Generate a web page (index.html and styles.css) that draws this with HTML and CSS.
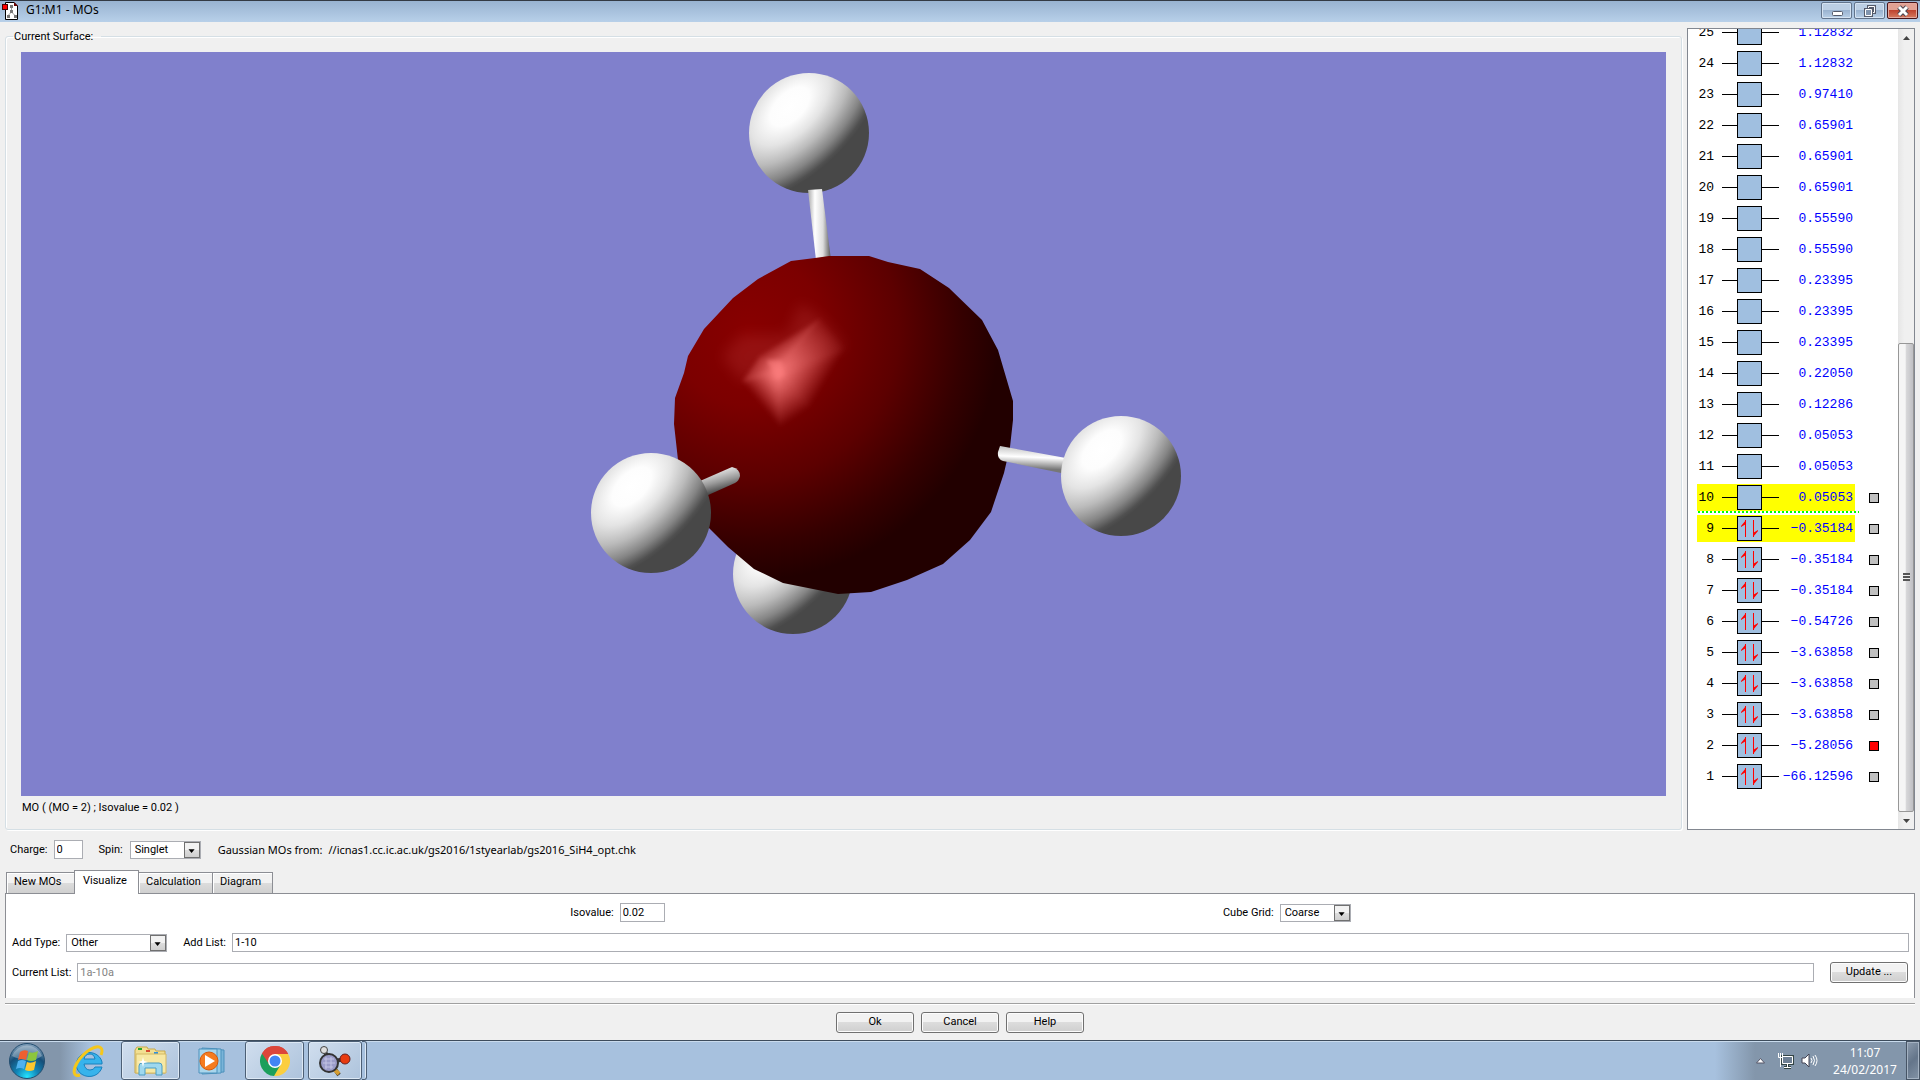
FILE: index.html
```html
<!DOCTYPE html>
<html lang="en">
<head>
<meta charset="utf-8">
<title>G1:M1 - MOs</title>
<link rel="stylesheet" href="styles.css">
</head>
<body>
<svg class="defs" width="0" height="0" aria-hidden="true">
  <symbol id="empty" viewBox="0 0 57 25"><path d="M0 12.5H57" stroke="#000"/><rect x="15.5" y=".5" width="24" height="24" fill="#a0bfe0" stroke="#000"/></symbol>
  <symbol id="full" viewBox="0 0 57 25"><path d="M0 12.5H57" stroke="#000"/><rect x="15.5" y=".5" width="24" height="24" fill="#a0bfe0" stroke="#000"/><path d="M23.5 4V21M31.500 4V21" stroke="#f00"/><path d="M24 4L19 10V11L24 8ZM31 21L36 15V14L31 17Z" fill="#f00"/></symbol>
  <symbol id="drop" viewBox="0 0 16 16"><path d="M4 7H11L7.500 11.500Z" fill="#000"/></symbol>
</svg>
<header class="titlebar">
  <svg class="app-icon" width="17" height="18" viewBox="0 0 17 18"><path d="M3.500 .5H12L15.500 4V17.500H3.500Z" fill="#fff" stroke="#000"/><path d="M12 0L16 4H12Z" fill="#600"/><path d="M9.500 5V10L5.500 14M9.500 10L13.500 14" fill="none" stroke="#999"/><path d="M8 3H11V6H8ZM8 8H11V11H8ZM5 13H8V16H5ZM12 13H15V16H12Z" fill="#777"/><rect x=".5" y="2.500" width="5" height="5" fill="#f00" stroke="#400"/></svg>
  <h1>G1:M1 - MOs</h1>
  <div class="winbtns">
    <button aria-label="Minimize"><svg width="28" height="14" viewBox="0 0 28 14"><rect x="9.500" y="7.500" width="10" height="4" rx="1" fill="#fff" stroke="#555b6b"/></svg></button>
    <button aria-label="Restore"><svg width="28" height="14" viewBox="0 0 28 14"><path d="M12.500 2.500H18.500V8.500H12.500Z" fill="#ccd9e8" stroke="#555b6b" stroke-width="3"/><path d="M12.500 2.500H18.500V8.500H12.500Z" fill="none" stroke="#fff"/><path d="M9.500 5.500H15.500V11.500H9.500Z" fill="#fff" stroke="#555b6b" stroke-width="3"/><path d="M9.500 5.500H15.500V11.500H9.500Z" fill="#8195af" stroke="#fff"/></svg></button>
    <button class="close" aria-label="Close"><svg width="28" height="14" viewBox="0 0 28 14"><path d="M10 3L18 11M18 3L10 11" stroke="#4c4650" stroke-width="5"/><path d="M10 3L18 11M18 3L10 11" stroke="#fff" stroke-width="3"/></svg></button>
  </div>
</header>
<main class="window">
  <div class="stage">
    <fieldset class="surface">
      <legend>Current Surface:</legend>
      <svg class="view" viewBox="0 0 1645 744" role="img" aria-label="Molecular orbital 2 surface">
        <defs>
          <radialGradient id="hyd" cx="0" cy="0" r="1" gradientTransform="translate(.34 .28) rotate(45) scale(.56 1)"><stop offset="0" stop-color="#fff"/><stop offset=".2" stop-color="#fdfdfd"/><stop offset=".4" stop-color="#e4e4e4"/><stop offset=".6" stop-color="#bbb"/><stop offset=".8" stop-color="#858585"/><stop offset=".95" stop-color="#505050"/><stop offset="1" stop-color="#484848"/></radialGradient>
          <radialGradient id="orb" cx=".22" cy=".22" r=".74"><stop offset="0" stop-color="#880000"/><stop offset=".3" stop-color="#7c0000"/><stop offset=".6" stop-color="#5c0000"/><stop offset=".85" stop-color="#350000"/><stop offset="1" stop-color="#220000"/></radialGradient>
          <linearGradient id="s" ><stop offset="0" stop-color="#ff8080"/><stop offset="1" stop-color="#ff8080" stop-opacity="0"/></linearGradient>
          <linearGradient id="s1" href="#s" gradientUnits="userSpaceOnUse" x1="755" y1="322" x2="731" y2="342"/>
          <linearGradient id="s2" href="#s" gradientUnits="userSpaceOnUse" x1="755" y1="322" x2="781" y2="361"/>
          <linearGradient id="s3" href="#s" gradientUnits="userSpaceOnUse" x1="755" y1="322" x2="795" y2="346"/>
          <linearGradient id="s4" href="#s" gradientUnits="userSpaceOnUse" x1="755" y1="322" x2="809" y2="276"/>
          <linearGradient id="s5" href="#s" gradientUnits="userSpaceOnUse" x1="755" y1="322" x2="740" y2="298"/>
          <linearGradient id="s6" href="#s" gradientUnits="userSpaceOnUse" x1="755" y1="322" x2="730" y2="305"/>
          <linearGradient id="rod" x1="0" x2="1" y1="0" y2="0"><stop offset="0" stop-color="#aaa"/><stop offset=".3" stop-color="#fff"/><stop offset=".65" stop-color="#ddd"/><stop offset="1" stop-color="#555"/></linearGradient>
          <linearGradient id="rod2" x1=".55" x2=".45" y1="0" y2="1"><stop offset=".1" stop-color="#ccc"/><stop offset=".4" stop-color="#fff"/><stop offset=".8" stop-color="#777"/></linearGradient>
          <linearGradient id="rod3" x1=".35" x2=".65" y1=".1" y2=".9"><stop offset=".1" stop-color="#ddd"/><stop offset=".5" stop-color="#999"/><stop offset=".9" stop-color="#444"/></linearGradient>
          <filter id="soft"><feGaussianBlur stdDeviation="2"/></filter>
          <filter id="softer"><feGaussianBlur stdDeviation="7"/></filter>
        </defs>
        <circle cx="788" cy="81" r="60" fill="url(#hyd)"/>
        <path d="M787 138L801 137L810 208H795Z" fill="url(#rod)"/>
        <circle cx="772" cy="522" r="60" fill="url(#hyd)"/>
        <path d="M770 209L794 206 808 204H848L867 210 899 217 928 236 961 268 977 298 992 349V368L989 395 983 421 970 460 949 488 922 512 886 528 850 540 817 542 792 537 762 531 733 517 707 495 688 476 665 437 657 408 653 372 654 346 663 321 667 304 683 277 712 246 737 227Z" fill="url(#orb)"/>
        <path d="M701 304L720 283 766 283 779 251 800 266 825 295 739 320 721 330Z" fill="#ff8080" opacity=".13" filter="url(#softer)"/>
        <g filter="url(#soft)">
          <path d="M755 322L721 330 759 376Z" fill="url(#s1)"/>
          <path d="M755 322L759 376 789 356Z" fill="url(#s2)"/>
          <path d="M755 322L789 356 825 295Z" fill="url(#s3)"/>
          <path d="M755 322L825 295 800 266Z" fill="url(#s4)"/>
          <path d="M755 322L800 266 739 304Z" fill="url(#s5)"/>
          <path d="M755 322L739 304 721 330Z" fill="url(#s6)"/>
          <path d="M745 308L760 308 764 322 757 330Z" fill="#ff8080" opacity=".6"/>
        </g>
        <path d="M679 429L711 415Q719 417 719 424Q718 429 714 431L685 444Z" fill="url(#rod3)"/>
        <path d="M979 394L1045 406V422L982 409Q976 407 977 400Z" fill="url(#rod2)"/>
        <circle cx="630" cy="461" r="60" fill="url(#hyd)"/>
        <circle cx="1100" cy="424" r="60" fill="url(#hyd)"/>
      </svg>
      <p class="caption">MO ( (MO = 2) ; Isovalue = 0.02 )</p>
    </fieldset>
    <section class="levels" aria-label="Orbital energies">
      <div class="list">
        <table>
          <tr><td>25</td><td><svg><use href="#empty"/></svg></td><td>1.12832</td><td></td></tr>
          <tr><td>24</td><td><svg><use href="#empty"/></svg></td><td>1.12832</td><td></td></tr>
          <tr><td>23</td><td><svg><use href="#empty"/></svg></td><td>0.97410</td><td></td></tr>
          <tr><td>22</td><td><svg><use href="#empty"/></svg></td><td>0.65901</td><td></td></tr>
          <tr><td>21</td><td><svg><use href="#empty"/></svg></td><td>0.65901</td><td></td></tr>
          <tr><td>20</td><td><svg><use href="#empty"/></svg></td><td>0.65901</td><td></td></tr>
          <tr><td>19</td><td><svg><use href="#empty"/></svg></td><td>0.55590</td><td></td></tr>
          <tr><td>18</td><td><svg><use href="#empty"/></svg></td><td>0.55590</td><td></td></tr>
          <tr><td>17</td><td><svg><use href="#empty"/></svg></td><td>0.23395</td><td></td></tr>
          <tr><td>16</td><td><svg><use href="#empty"/></svg></td><td>0.23395</td><td></td></tr>
          <tr><td>15</td><td><svg><use href="#empty"/></svg></td><td>0.23395</td><td></td></tr>
          <tr><td>14</td><td><svg><use href="#empty"/></svg></td><td>0.22050</td><td></td></tr>
          <tr><td>13</td><td><svg><use href="#empty"/></svg></td><td>0.12286</td><td></td></tr>
          <tr><td>12</td><td><svg><use href="#empty"/></svg></td><td>0.05053</td><td></td></tr>
          <tr><td>11</td><td><svg><use href="#empty"/></svg></td><td>0.05053</td><td></td></tr>
          <tr class="sel lumo"><td>10</td><td><svg><use href="#empty"/></svg></td><td>0.05053</td><td><input type="checkbox" aria-label="MO 10"></td></tr>
          <tr class="sel"><td>9</td><td><svg><use href="#full"/></svg></td><td>−0.35184</td><td><input type="checkbox" aria-label="MO 9"></td></tr>
          <tr><td>8</td><td><svg><use href="#full"/></svg></td><td>−0.35184</td><td><input type="checkbox" aria-label="MO 8"></td></tr>
          <tr><td>7</td><td><svg><use href="#full"/></svg></td><td>−0.35184</td><td><input type="checkbox" aria-label="MO 7"></td></tr>
          <tr><td>6</td><td><svg><use href="#full"/></svg></td><td>−0.54726</td><td><input type="checkbox" aria-label="MO 6"></td></tr>
          <tr><td>5</td><td><svg><use href="#full"/></svg></td><td>−3.63858</td><td><input type="checkbox" aria-label="MO 5"></td></tr>
          <tr><td>4</td><td><svg><use href="#full"/></svg></td><td>−3.63858</td><td><input type="checkbox" aria-label="MO 4"></td></tr>
          <tr><td>3</td><td><svg><use href="#full"/></svg></td><td>−3.63858</td><td><input type="checkbox" aria-label="MO 3"></td></tr>
          <tr><td>2</td><td><svg><use href="#full"/></svg></td><td>−5.28056</td><td><input type="checkbox" aria-label="MO 2" checked></td></tr>
          <tr><td>1</td><td><svg><use href="#full"/></svg></td><td>−66.12596</td><td><input type="checkbox" aria-label="MO 1"></td></tr>
        </table>
      </div>
      <div class="scroll">
        <svg width="16" height="17" viewBox="0 0 16 17"><path d="M5 11L8.500 7L12 11Z" fill="#444"/></svg>
        <div class="track"><div class="thumb"><i></i></div></div>
        <svg width="16" height="17" viewBox="0 0 16 17"><path d="M5 7L8.500 11L12 7Z" fill="#444"/></svg>
      </div>
    </section>
  </div>
  <div class="settings">
    <label for="charge">Charge:</label><input id="charge" class="charge" type="text" value="0">
    <label for="spin" class="spin-label">Spin:</label>
    <span class="combo w-spin"><select id="spin"><option>Singlet</option></select><svg><use href="#drop"/></svg></span>
    <span class="source"><span>Gaussian MOs from:</span><span>//icnas1.cc.ic.ac.uk/gs2016/1styearlab/gs2016_SiH4_opt.chk</span></span>
  </div>
  <div class="tabs" role="tablist">
    <button role="tab" class="t1">New MOs</button><button role="tab" class="t2 on" aria-selected="true">Visualize</button><button role="tab" class="t3">Calculation</button><button role="tab" class="t4">Diagram</button>
  </div>
  <div class="pane">
    <div class="line split">
      <div><label for="iso">Isovalue:</label><input id="iso" class="iso" type="text" value="0.02"></div>
      <div><label for="grid">Cube Grid:</label><span class="combo w-spin"><select id="grid"><option>Coarse</option></select><svg><use href="#drop"/></svg></span></div>
    </div>
    <div class="line">
      <label for="type">Add Type:</label><span class="combo w-type"><select id="type"><option>Other</option></select><svg><use href="#drop"/></svg></span>
      <label for="add" class="add-label">Add List:</label><input id="add" class="grow" type="text" value="1-10">
    </div>
    <div class="line">
      <label for="cur">Current List:</label><input id="cur" class="grow" type="text" value="1a-10a" disabled>
      <button class="btn update">Update ...</button>
    </div>
  </div>
  <div class="actions"><button class="btn">Ok</button><button class="btn">Cancel</button><button class="btn">Help</button></div>
</main>
<footer class="taskbar">
  <button class="task start" aria-label="Start"><svg width="38" height="38" viewBox="0 0 38 38"><defs><radialGradient id="so" cx=".5" cy=".95" r=".9"><stop offset="0" stop-color="#25e4ff"/><stop offset=".35" stop-color="#1286b8"/><stop offset=".7" stop-color="#164e78"/><stop offset="1" stop-color="#7a9ab5"/></radialGradient></defs><circle cx="19" cy="19" r="17.500" fill="url(#so)" stroke="#234e70"/><path d="M4 14A16 16 0 0 1 34 14Q27 19 19 18Q10 17 4 14Z" fill="#fff" opacity=".3"/><path d="M12 10Q16 7 20 9L18 18Q14 16 10 18Z" fill="#ee6030"/><path d="M21 10Q25 12 30 9L28 18Q23 20 19 18Z" fill="#8cc63c"/><path d="M10 19Q14 17 18 19L16 27Q12 25 8 27Z" fill="#4fb1ee"/><path d="M19 20Q23 22 28 19L26 28Q21 30 17 28Z" fill="#fdc72f"/></svg></button>
  <button class="task ie" aria-label="Internet Explorer"><svg width="32" height="34" viewBox="0 0 32 34"><path d="M23 23H30A13 12 0 1 1 30 18V20H12Q13 26 18 26Q22 26 23 23Z" fill="#36b3ec" stroke="#1980bd"/><path d="M12 15H23Q22 10 18 10Q13 10 12 15Z" fill="#a7c2df" stroke="#1980bd"/><path d="M8 31C2 33 0 28 5 19C12 7 25 0 29 4Q31 6 29 11" fill="none" stroke="#f5c71b" stroke-width="3"/></svg></button>
  <button class="task box explorer" aria-label="Windows Explorer"><svg width="34" height="30" viewBox="0 0 34 30"><path d="M1 4L3 1H13L14 3H21L22 5H31V27H1Z" fill="#f2df91" stroke="#c7a94d"/><path d="M4 2H8V4H4Z" fill="#2ba52b"/><path d="M12 4H16V6H12Z" fill="#d64a30"/><path d="M20 6H24V8H20Z" fill="#3192dc"/><path d="M2 8H32V27H2Z" fill="#f7e8a3" stroke="#d4b964"/><path d="M5 29V20Q5 17 8 17H25Q28 17 28 20V29H22V22H11V29Z" fill="#9fd8ee" stroke="#4b9dc4"/><path d="M9 11L10 15L14 16L10 17L9 21L8 17L4 16L8 15Z" fill="#fff"/></svg></button>
  <button class="task media" aria-label="Media Player"><svg width="30" height="28" viewBox="0 0 30 28"><path d="M8 2L26 3V25L8 26Z" fill="#79b4d8" stroke="#4c91bc"/><path d="M4 1L23 2V26L4 27Z" fill="#94cae6" stroke="#4c91bc"/><path d="M1 2H19V26H1Z" fill="#a9d6ec" stroke="#4c91bc"/><circle cx="11" cy="14" r="9" fill="#f57c1f" stroke="#d65a0c"/><path d="M7 8L17 14L7 20Z" fill="#fff"/></svg></button>
  <button class="task box chrome" aria-label="Chrome"><svg width="30" height="30" viewBox="0 0 30 30"><path d="M15 15L2 7.500A15 15 0 0 1 28 7.500Z" fill="#dc463a"/><path d="M15 15V8H28.200A15 15 0 0 1 14 30Z" fill="#fbce3e"/><path d="M15 15L2 7.500A15 15 0 0 0 14 30L21 18Z" fill="#1c9f5b"/><path d="M2 7.500A15 15 0 0 1 28.200 8H15L9 18Z" fill="#dc463a"/><circle cx="15" cy="15" r="7" fill="#fff"/><circle cx="15" cy="15" r="5.500" fill="#4285f4"/></svg></button>
  <button class="task box gauss" aria-label="GaussView"><svg width="34" height="32" viewBox="0 0 34 32"><path d="M6 5L12 17L27 14M12 17L21 30" fill="none" stroke="#333" stroke-width="4"/><path d="M17 25L21 29" stroke="#d59d31" stroke-width="4"/><circle cx="11" cy="18" r="9" fill="#9b9cc9" stroke="#333" stroke-width="2"/><path d="M6 14H16M5 18H17M7 22H15M8 12V24M13 12V24" stroke="#c3c4e4"/><circle cx="6" cy="5" r="3.500" fill="#ddd" stroke="#444"/><circle cx="27" cy="14" r="5" fill="#e83b10" stroke="#622"/></svg></button>
  <span class="stack-edge"></span>
  <div class="tray">
    <svg width="9" height="6" viewBox="0 0 9 6"><path d="M.5 5L4.500 .5L8.500 5Z" fill="#fff" stroke="#556"/></svg>
    <svg class="net" width="17" height="17" viewBox="0 0 17 17"><path d="M5.500 4.500H15.500V11.500H5.500ZM10.500 12V15M7 15.500H14" fill="#6d7f94" stroke="#344" stroke-width="3"/><path d="M5.500 4.500H15.500V11.500H5.500Z" fill="#6d7f94" stroke="#fff"/><path d="M10.500 12V15M7 15.500H14M1.500 1V5.500H5.500V1M3.500 1V15" fill="none" stroke="#fff"/></svg>
    <svg class="vol" width="17" height="17" viewBox="0 0 17 17"><path d="M1 6H4L8 2V15L4 11H1Z" fill="#fff" stroke="#445"/><path d="M10 6Q12 8.500 10 11M12 4Q15 8.500 12 13M14 3Q18 8.500 14 14" fill="none" stroke="#fff"/></svg>
    <time><span>11:07</span><span>24/02/2017</span></time>
    <button class="desktop" aria-label="Show desktop"></button>
  </div>
</footer>
</body>
</html>
```
FILE: styles.css
```css
* { box-sizing: border-box; }
body { margin: 0; height: 100vh; display: flex; flex-direction: column; overflow: hidden; background: #f0f0f0; color: #000; font: 11px/16px Roboto, "Liberation Sans", sans-serif; }
button, input, select { font: inherit; color: inherit; margin: 0; }
svg { display: block; flex: none; }
.defs { position: absolute; }

.titlebar { height: 22px; flex: none; display: flex; align-items: flex-start; padding-left: 2px; border-top: 1px solid #333a44; background: linear-gradient(#98b3d1, #b8d0e9); }
.app-icon { margin-top: 1px; }
.titlebar h1 { margin: 1px 0 0 7px; flex: 1; font: 12px/16px "Noto Sans", sans-serif; }
.winbtns { display: flex; gap: 2px; padding-right: 2px; margin-top: 1px; }
.winbtns button { width: 31px; height: 17px; padding: 0; display: flex; justify-content: center; align-items: center; border: 1px solid #62748c; border-radius: 2px; box-shadow: inset 0 0 0 1px #d5e3f2; background: linear-gradient(#bccfe4 50%, #9ab3d0 50%, #b8cfe7); }
.winbtns .close { border-color: #4a1418; box-shadow: inset 0 0 0 1px #e4a99e; background: linear-gradient(#e2a193 45%, #bf4430 50%, #d67c61); }

.window { flex: 1; min-height: 0; display: flex; flex-direction: column; }
.stage { flex: 1; min-height: 0; display: flex; gap: 5px; padding: 6px 5px 0; }
.surface { flex: 1; min-width: 0; margin: 0; padding: 7px 15px 13px; display: flex; flex-direction: column; border: 1px solid #d5dfe5; border-radius: 3px; box-shadow: inset 1px 1px #fff, 1px 1px #fff; }
.surface legend { margin-left: -8px; padding: 1px 8px 0 1px; }
.view { width: 100%; flex: 1; min-height: 0; background: #8080cc; }
.caption { margin: 4px 0 0 1px; }

.levels { width: 228px; flex: none; display: flex; border: 1px solid #828790; background: #fff; }
.list { flex: 1; min-width: 0; overflow: hidden; display: flex; flex-direction: column; justify-content: flex-end; padding: 0 0 37px 9px; }
.list table { flex: none; width: 190px; border-collapse: collapse; table-layout: fixed; font: 13px/16px "Liberation Mono", monospace; }
.list tr { height: 31px; }
.list td { padding: 0; text-align: right; white-space: nowrap; }
.list td:nth-child(1) { width: 17px; }
.list td:nth-child(2) { width: 65px; padding-left: 8px; }
.list td:nth-child(3) { width: 74px; color: #00f; }
.list td:nth-child(4) { padding-left: 16px; text-align: left; }
.list svg { width: 57px; height: 25px; }
.sel { background: linear-gradient(#ff0, #ff0) 0 2px / 158px 27px no-repeat; }
.lumo { background: linear-gradient(#ff0, #ff0) 0 2px / 158px 27px no-repeat, repeating-linear-gradient(90deg, #fff 0 1px, #0f0 1px 3px, #fff 3px 4px) 0 29px / 162px 2px no-repeat; }
.list input { appearance: none; display: block; width: 10px; height: 10px; border: 1px solid #000; background: #c0c0c0; }
.list input:checked { background: #f00; }
.scroll { width: 16px; display: flex; flex-direction: column; background: linear-gradient(90deg, #e6e6e6, #f0f0f0 40%); }
.track { flex: 1; display: flex; flex-direction: column; justify-content: flex-end; }
.thumb { height: calc(61% + 2px); display: flex; align-items: center; justify-content: center; border: 1px solid #979797; border-radius: 2px; background: linear-gradient(90deg, #f5f5f5 45%, #d8d8da 50%, #c0c0c4); }
.thumb i { width: 7px; height: 8px; background: repeating-linear-gradient(#555 0 2px, #eee 2px 3px); }

.settings { height: 40px; display: flex; align-items: center; padding: 0 0 1px 10px; flex: none; }
input[type="text"] { height: 19px; padding: 0 2px; border: 1px solid #abadb3; background: #fff; min-width: 0; border-radius: 0; outline: 0; }
input:disabled { color: #838383; }
.charge { width: 29px; margin-left: 6px; }
.spin-label { margin: 0 7px 0 16px; }
.combo { position: relative; display: block; height: 18px; flex: none; }
.combo select { appearance: none; display: block; width: 100%; height: 18px; padding: 0 4px 2px; border: 1px solid #abadb3; border-radius: 0; background: #fff; }
.combo svg { position: absolute; top: 1px; right: 1px; width: 16px; height: 16px; border: 1px solid #707070; background: linear-gradient(#f2f2f2 50%, #ddd 50%, #cfcfcf); pointer-events: none; }
.w-spin { width: 71px; }
.w-type { width: 101px; }
.source { display: flex; gap: 6px; margin-left: 17px; font: 11px/16px "Noto Sans", sans-serif; }

.tabs { height: 24px; flex: none; display: flex; align-items: flex-end; padding-left: 6px; position: relative; margin-bottom: -1px; }
.tabs button { height: 22px; padding: 0 7px 2px; text-align: left; border: 1px solid #8c8e94; margin-right: -1px; background: linear-gradient(#f2f2f2 50%, #dcdcdc 50%, #d0d0d0); box-shadow: inset 1px 1px #fff; }
.tabs .t1 { width: 69px; }
.tabs .t2 { width: 65px; }
.tabs .t3 { width: 75px; }
.tabs .t4 { width: 61px; }
.tabs .on { height: 24px; padding: 0 8px 4px; border-bottom: 0; background: #fff; }
.pane { height: 105px; flex: none; margin: 0 5px; padding: 9px 5px 0 6px; display: flex; flex-direction: column; gap: 11px; border: 1px solid #8c8e94; border-bottom: 0; background: #fff; }
.line { height: 19px; display: flex; align-items: center; flex: none; }
.line label { margin-right: 6px; white-space: nowrap; }
.line .add-label { margin-left: 16px; }
.split { justify-content: space-evenly; }
.split div { display: flex; align-items: center; }
.iso { width: 45px; }
.grow { flex: 1; }
.btn { width: 78px; height: 21px; flex: none; padding: 0 0 2px; border: 1px solid #707070; border-radius: 3px; background: linear-gradient(#f2f2f2 50%, #dcdcdc 50%, #cfcfcf); box-shadow: inset 0 0 0 1px #fcfcfc; }
.update { margin: 0 1px 0 16px; }
.actions { height: 37px; flex: none; margin: 5px 5px 0; padding-top: 8px; display: flex; justify-content: center; gap: 7px; border-top: 1px solid #a0a0a0; box-shadow: inset 0 1px #fff; }

.taskbar { height: 40px; flex: none; display: flex; border-top: 1px solid #3d4c5c; box-shadow: inset 0 1px #c9dbed; background: linear-gradient(90deg, #8396ab 0 60px, #a7c1de 90px calc(100% - 205px), #8396ab calc(100% - 165px)); }
.task { border: 0; background: none; padding: 0; display: flex; align-items: center; justify-content: center; height: 39px; }
.start { width: 54px; }
.ie { width: 67px; }
.media { width: 65px; }
.box { width: 59px; border: 1px solid #4c5f75; border-radius: 3px; box-shadow: inset 0 0 0 1px #dce8f4; background: linear-gradient(135deg, #d0deee, #adc3dc); }
.gauss { width: 54px; margin-left: 4px; }
.stack-edge { width: 5px; border: 1px solid #4c5f75; border-left: 0; border-radius: 0 3px 3px 0; box-shadow: inset -1px 0 #dce8f4; }
.tray { margin-left: auto; display: flex; align-items: center; color: #fff; }
.net { margin-left: 12px; }
.vol { margin-left: 7px; }
time { width: 82px; margin-left: 6px; display: flex; flex-direction: column; font: 12px/17px "Noto Sans", sans-serif; text-align: center; }
.desktop { width: 14px; height: 39px; border: 1px solid #465465; box-shadow: inset 0 0 0 1px #a4b2c2; background: linear-gradient(135deg, #8d9cae, #64758a 50%, #8393a6); padding: 0; }
```
